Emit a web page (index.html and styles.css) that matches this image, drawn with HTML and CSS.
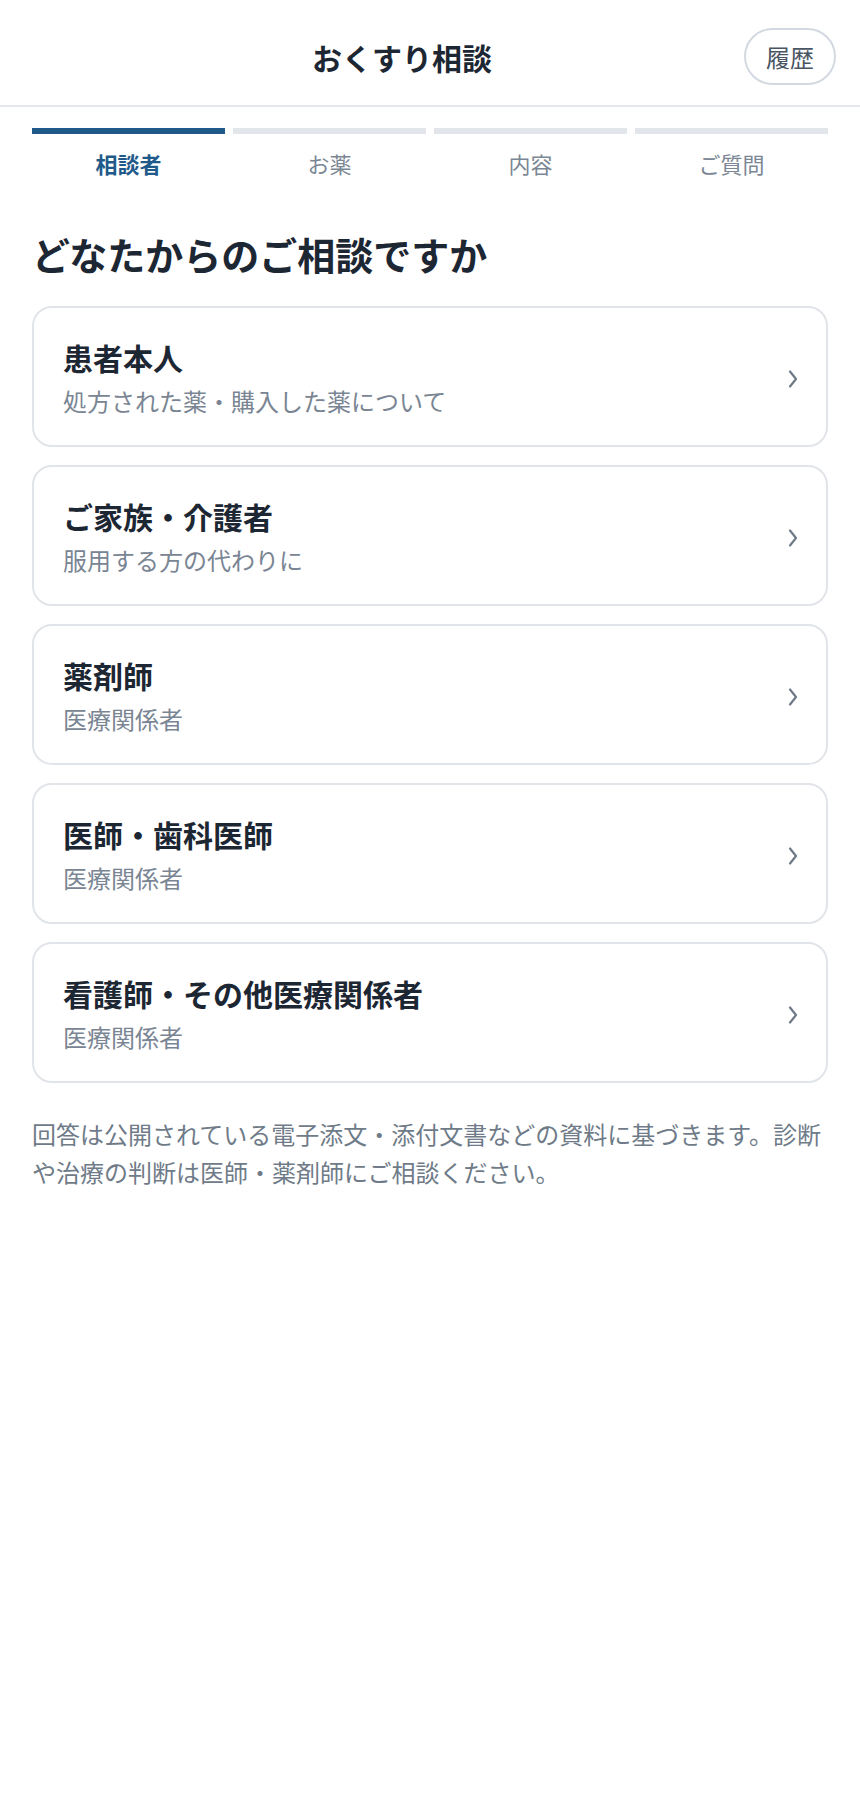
FILE: index.html
```html
<!DOCTYPE html>
<html lang="ja">
<head>
<meta charset="utf-8">
<title>おくすり相談</title>
<link rel="stylesheet" href="styles.css">
</head>
<body>
<header class="topbar">
  <div class="spacer"></div>
  <h1 class="title">おくすり相談</h1>
  <button class="history">履歴</button>
</header>
<main class="content">
  <nav class="steps">
    <div class="step active"><span class="bar"></span><span class="label">相談者</span></div>
    <div class="step"><span class="bar"></span><span class="label">お薬</span></div>
    <div class="step"><span class="bar"></span><span class="label">内容</span></div>
    <div class="step"><span class="bar"></span><span class="label">ご質問</span></div>
  </nav>
  <h2 class="question">どなたからのご相談ですか</h2>
  <ul class="options">
    <li class="option">
      <div class="text"><div class="opt-title">患者本人</div><div class="opt-sub">処方された薬・購入した薬について</div></div>
      <svg class="chev" width="12" height="20" viewBox="0 0 12 20"><path d="M4 2.5 L10 10 L4 17.5" fill="none" stroke="#6e7a88" stroke-width="2.2" stroke-linecap="round" stroke-linejoin="round"/></svg>
    </li>
    <li class="option">
      <div class="text"><div class="opt-title">ご家族・介護者</div><div class="opt-sub">服用する方の代わりに</div></div>
      <svg class="chev" width="12" height="20" viewBox="0 0 12 20"><path d="M4 2.5 L10 10 L4 17.5" fill="none" stroke="#6e7a88" stroke-width="2.2" stroke-linecap="round" stroke-linejoin="round"/></svg>
    </li>
    <li class="option">
      <div class="text"><div class="opt-title">薬剤師</div><div class="opt-sub">医療関係者</div></div>
      <svg class="chev" width="12" height="20" viewBox="0 0 12 20"><path d="M4 2.5 L10 10 L4 17.5" fill="none" stroke="#6e7a88" stroke-width="2.2" stroke-linecap="round" stroke-linejoin="round"/></svg>
    </li>
    <li class="option">
      <div class="text"><div class="opt-title">医師・歯科医師</div><div class="opt-sub">医療関係者</div></div>
      <svg class="chev" width="12" height="20" viewBox="0 0 12 20"><path d="M4 2.5 L10 10 L4 17.5" fill="none" stroke="#6e7a88" stroke-width="2.2" stroke-linecap="round" stroke-linejoin="round"/></svg>
    </li>
    <li class="option">
      <div class="text"><div class="opt-title">看護師・その他医療関係者</div><div class="opt-sub">医療関係者</div></div>
      <svg class="chev" width="12" height="20" viewBox="0 0 12 20"><path d="M4 2.5 L10 10 L4 17.5" fill="none" stroke="#6e7a88" stroke-width="2.2" stroke-linecap="round" stroke-linejoin="round"/></svg>
    </li>
  </ul>
  <p class="note">回答は公開されている電子添文・添付文書などの資料に基づきます。診断や治療の判断は医師・薬剤師にご相談ください。</p>
</main>
</body>
</html>
```
FILE: styles.css
```css
* { box-sizing: border-box; }
html, body { margin: 0; padding: 0; background: #ffffff; }
body {
  font-family: "Noto Sans CJK JP", "Noto Sans", sans-serif;
  color: #1d2733;
}
.topbar {
  display: flex;
  align-items: center;
  gap: 16px;
  height: 107px;
  padding: 8px 24px 0 24px;
  border-bottom: 2px solid #e4e7eb;
}
.spacer { width: 36px; flex: none; }
.title {
  flex: 1;
  margin: 0;
  text-align: center;
  font-size: 30px;
  line-height: 40px;
  font-weight: 700;
  color: #1d2733;
}
.history {
  flex: none;
  width: 92px;
  height: 57px;
  border: 2px solid #d3d9e0;
  border-radius: 29px;
  background: #ffffff;
  font-family: inherit;
  font-size: 24px;
  color: #4a5563;
  padding: 0;
}
.content { padding: 0 32px; }
.steps {
  display: grid;
  grid-template-columns: repeat(4, 1fr);
  gap: 8px;
  margin-top: 21px;
}
.step { display: flex; flex-direction: column; align-items: center; }
.bar { display: block; width: 100%; height: 6px; background: #e2e6ea; }
.label {
  margin-top: 14px;
  font-size: 22px;
  line-height: 31px;
  color: #7b8794;
}
.step.active .bar { background: #1f5a8a; }
.step.active .label { color: #1f5a8a; font-weight: 700; }
.question {
  margin: 50px 0 0 0;
  font-size: 38px;
  line-height: 50px;
  font-weight: 700;
  color: #1d2733;
}
.options {
  list-style: none;
  margin: 27px 0 0 0;
  padding: 0;
  display: flex;
  flex-direction: column;
  gap: 18px;
}
.option {
  display: flex;
  align-items: center;
  border: 2px solid #e1e4e8;
  border-radius: 20px;
  padding: 30px 28px 26px 29px;
  background: #ffffff;
}
.text { flex: 1; display: flex; flex-direction: column; gap: 6px; }
.opt-title {
  font-size: 30px;
  line-height: 39px;
  font-weight: 700;
  color: #1d2733;
}
.opt-sub {
  font-size: 24px;
  line-height: 36px;
  color: #7a8593;
}
.chev { flex: none; display: block; }
.note {
  margin: 32px 0 0 0;
  font-size: 24px;
  line-height: 38.4px;
  color: #6f7b88;
}
```
